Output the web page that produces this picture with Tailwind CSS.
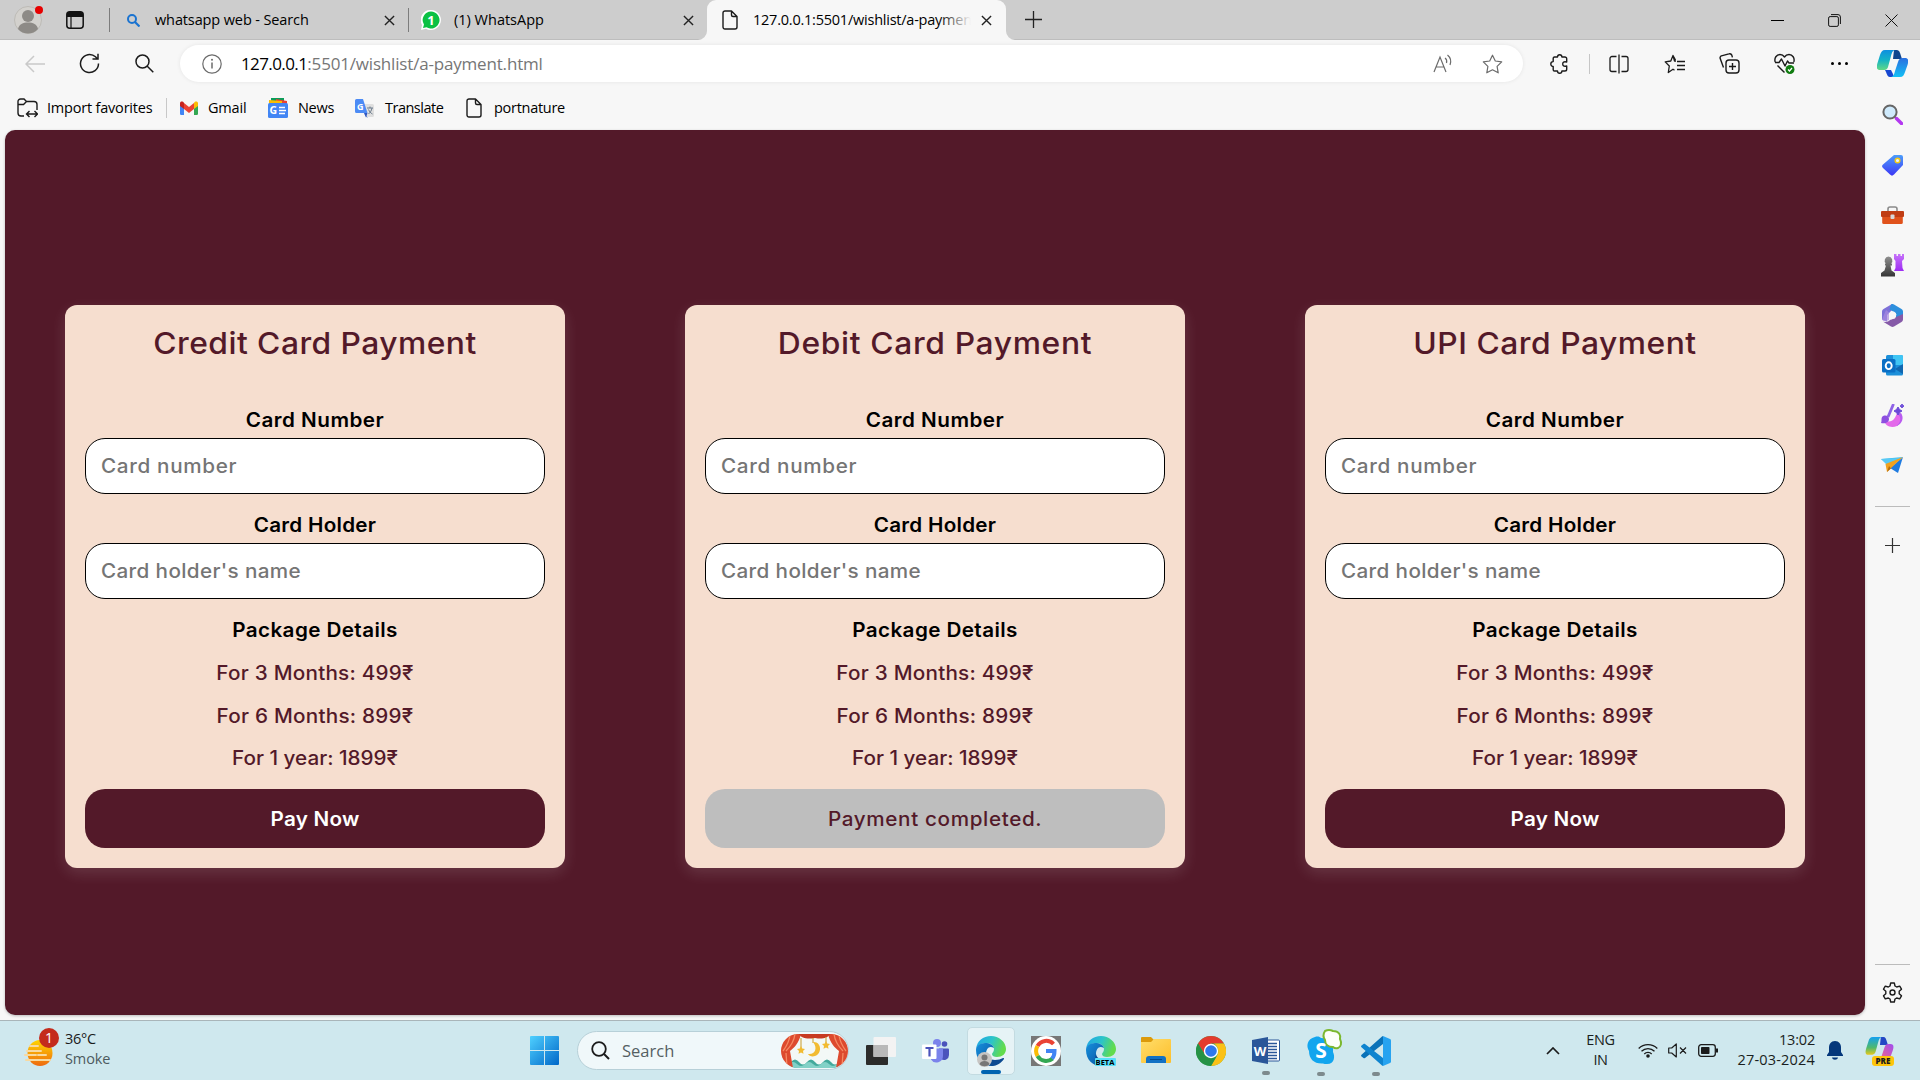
<!DOCTYPE html>
<html lang="en">
<head>
<meta charset="utf-8">
<title>Payment</title>
<script src="https://cdn.jsdelivr.net/npm/@tailwindcss/browser@4"></script>
</head>
<body class="w-[1920px] h-[1080px] overflow-hidden flex flex-col bg-[#f7f7f7] text-black whitespace-nowrap font-['Open_Sans',sans-serif] text-[14.5px] leading-5">

<svg class="absolute w-0 h-0" aria-hidden="true">
  <defs>
    <linearGradient id="edgeA" x1="0" y1="0" x2="1" y2="0.3"><stop offset="0" stop-color="#1fa3e8"/><stop offset=".55" stop-color="#2cc4c9"/><stop offset="1" stop-color="#62dc4c"/></linearGradient>
    <linearGradient id="edgeB" x1="0" y1="0" x2="1" y2="1"><stop offset="0" stop-color="#1590dc"/><stop offset="1" stop-color="#0a4f9e"/></linearGradient>
    <linearGradient id="copA" x1="0" y1="0" x2="0" y2="1"><stop offset="0" stop-color="#0d8fe0"/><stop offset=".5" stop-color="#14b3c6"/><stop offset="1" stop-color="#62d985"/></linearGradient>
    <linearGradient id="copB" x1="0" y1="0" x2="0" y2="1"><stop offset="0" stop-color="#2a6fe0"/><stop offset="1" stop-color="#14c0f5"/></linearGradient>
    <linearGradient id="preA" x1="0" y1="0" x2="0" y2="1"><stop offset="0" stop-color="#14a0ef"/><stop offset=".6" stop-color="#4fb96c"/><stop offset="1" stop-color="#e8c81c"/></linearGradient>
    <linearGradient id="preB" x1="1" y1="0" x2="0" y2="1"><stop offset="0" stop-color="#a04df0"/><stop offset="1" stop-color="#ff6a7a"/></linearGradient>
    <linearGradient id="win" x1="0" y1="0" x2="1" y2="1"><stop offset="0" stop-color="#4fd0ff"/><stop offset="1" stop-color="#0067c8"/></linearGradient>
    <linearGradient id="sun" x1="0" y1="0" x2="0" y2="1"><stop offset="0" stop-color="#ffd400"/><stop offset="1" stop-color="#ee6a10"/></linearGradient>
    <linearGradient id="fold" x1="0" y1="0" x2="1" y2="1"><stop offset="0" stop-color="#ffdd6b"/><stop offset="1" stop-color="#fdbf2b"/></linearGradient>
    <linearGradient id="tag" x1="0" y1="0" x2="0" y2="1"><stop offset="0" stop-color="#4c9dfb"/><stop offset="1" stop-color="#3c37f5"/></linearGradient>
    <linearGradient id="rook" x1="0" y1="0" x2="0" y2="1"><stop offset="0" stop-color="#c774fa"/><stop offset="1" stop-color="#9d2cf2"/></linearGradient>
    <linearGradient id="pawn" x1="0" y1="0" x2="0" y2="1"><stop offset="0" stop-color="#909090"/><stop offset="1" stop-color="#353535"/></linearGradient>
    <symbol id="edge" viewBox="0 0 30 30">
      <path fill="url(#edgeA)" d="M0 13C1 5 7 0 15 0c8 0 15 6 15 13 0 5-4 8-9 8-3 0-5-1-5-3 0-1 2-2 2-5 0-3-3-6-8-6-5 0-9 3-10 6z"/>
      <path fill="url(#edgeB)" d="M0 14c0-4 4-7 9-7 5 0 8 2 9 5-5-3-8 1-8 6 0 5 4 10 9 11-2 1-3 1-4 1C7 30 0 24 0 14z"/>
      <path fill="#0c4a91" d="M10 18c0 3 4 6 9 6 3 0 6-1 8-2 1 0 1 0 1 1-3 4-7 7-12 7-5-2-8-7-6-12z"/>
    </symbol>
    <symbol id="doc" viewBox="0 0 16 20"><path fill="none" stroke="#1b1b1b" stroke-width="1.4" stroke-linejoin="round" d="M3 1h6.500l5.500 5.500V17a2 2 0 0 1-2 2H3a2 2 0 0 1-2-2V3a2 2 0 0 1 2-2zM9.500 1v4a1.500 1.500 0 0 0 1.500 1.500h4"/></symbol>
    <symbol id="x" viewBox="0 0 12 12"><path fill="none" stroke="#222" stroke-width="1.500" d="M1 1l10 10M11 1L1 11"/></symbol>
  </defs>
</svg>

<!-- Tab strip -->
<header class="h-10 shrink-0 bg-[#cdcdcd] border-b border-[#bdbdbd] flex items-start">
  <div class="w-14 h-10 flex items-center justify-center">
    <svg class="w-7 h-7 overflow-visible" viewBox="0 0 28 28"><circle cx="14" cy="14" r="13.500" fill="#d3d1cd" stroke="#bdbbb6"/><circle cx="14" cy="10" r="6" fill="#8d8a86"/><path fill="#8d8a86" d="M4 23c1-5 5-6.500 10-6.500S23 18 24 23c-5 6-15 6-20 0z"/><circle cx="25" cy="4" r="4" fill="#e60000"/></svg>
  </div>
  <div class="w-[38px] h-10 flex items-center justify-center">
    <svg class="w-[18px] h-[18px]" viewBox="0 0 18 18"><rect x=".8" y=".8" width="16.400" height="16.400" rx="3" fill="none" stroke="#111" stroke-width="1.500"/><path d="M1 3a2 2 0 0 1 2-2h12a2 2 0 0 1 2 2v3H1z" fill="#111"/><path d="M5 5v12" stroke="#111" stroke-width="1.200"/></svg>
  </div>
  <div class="ml-[15px] w-px h-6 mt-2 bg-[#7c7c7c]"></div>
  <div class="w-[298px] h-10 flex items-center pl-[17px] pr-[13px]">
    <svg class="w-[13px] h-[13px]" viewBox="0 0 13 13"><circle cx="5" cy="5" r="4" fill="none" stroke="#1a73d0" stroke-width="2"/><path d="M8 8l4.500 4.500" stroke="#1a73d0" stroke-width="2.200"/></svg>
    <span class="ml-[15px] tracking-[-0.12px] flex-1">whatsapp web - Search</span>
    <svg class="w-[11px] h-[11px]"><use href="#x"/></svg>
  </div>
  <div class="w-px h-6 mt-2 bg-[#7c7c7c]"></div>
  <div class="w-[298px] h-10 flex items-center pl-[12px] pr-[13px]">
    <svg class="w-5 h-5" viewBox="0 0 20 20"><path d="M10 0a10 10 0 1 1-5 18.700L0 20l1-5A10 10 0 0 1 10 0z" fill="#fff"/><path d="M10 1.500a8.500 8.500 0 1 1-4.500 15.700L2 18l1-3.500A8.500 8.500 0 0 1 10 1.500z" fill="#0bc143"/><text x="10" y="14.500" text-anchor="middle" font-family="Open Sans" font-size="13" font-weight="700" fill="#fff">1</text></svg>
    <span class="ml-[13px] flex-1">(1) WhatsApp</span>
    <svg class="w-[11px] h-[11px]"><use href="#x"/></svg>
  </div>
  <div class="relative w-[299px] h-10 bg-[#f7f7f7] rounded-t-[9px] flex items-center pl-[15px] pr-[14px]">
    <svg class="absolute -left-[9px] bottom-0 w-[9px] h-[9px]" viewBox="0 0 9 9"><path d="M9 0v9H0a9 9 0 0 0 9-9z" fill="#f7f7f7"/></svg>
    <svg class="absolute -right-[9px] bottom-0 w-[9px] h-[9px]" viewBox="0 0 9 9"><path d="M0 0v9h9a9 9 0 0 1-9-9z" fill="#f7f7f7"/></svg>
    <svg class="w-4 h-5"><use href="#doc"/></svg>
    <div class="relative ml-[15px] w-[218px] overflow-hidden tracking-[-0.23px]">127.0.0.1:5501/wishlist/a-paymen<div class="absolute right-0 top-0 h-5 w-8 bg-linear-to-r from-[#f7f7f7]/0 to-[#f7f7f7]"></div></div>
    <svg class="w-[11px] h-[11px] ml-auto"><use href="#x"/></svg>
  </div>
  <svg class="w-[17px] h-[17px] ml-[19px] mt-[11px]" viewBox="0 0 17 17"><path d="M8.500 0v17M0 8.500h17" stroke="#222" stroke-width="1.300"/></svg>
  <div class="ml-auto h-10 flex items-center">
    <div class="w-[57px] flex justify-center"><div class="w-[13px] h-px bg-black"></div></div>
    <div class="w-[57px] flex justify-center"><svg class="w-[13px] h-[13px]" viewBox="0 0 13 13"><rect x=".6" y="2.600" width="9.800" height="9.800" rx="1.500" fill="none" stroke="#111"/><path d="M3 .6h7a2.400 2.400 0 0 1 2.400 2.400v7" fill="none" stroke="#111"/></svg></div>
    <div class="w-[57px] flex justify-center"><svg class="w-[13px] h-[13px]" viewBox="0 0 13 13"><path d="M.5.5l12 12M12.500.5l-12 12" stroke="#111"/></svg></div>
  </div>
</header>

<!-- Toolbar -->
<div class="h-[46px] shrink-0 flex items-center pl-[7px] pt-px">
  <div class="w-[55px] flex justify-center"><svg class="w-5 h-[18px]" viewBox="0 0 20 18"><path d="M9 1L1 9l8 8M1 9h19" fill="none" stroke="#c9c9c9" stroke-width="1.500"/></svg></div>
  <div class="w-[55px] flex justify-center"><svg class="w-[21px] h-[21px]" viewBox="0 0 21 21"><path d="M19.500 10.500a9 9 0 1 1-3-6.700L18.500 6M19 .8V6h-5.500" fill="none" stroke="#1b1b1b" stroke-width="1.500"/></svg></div>
  <div class="w-[55px] flex justify-center"><svg class="w-[19px] h-[19px]" viewBox="0 0 19 19"><circle cx="7.500" cy="7.500" r="6.500" fill="none" stroke="#1b1b1b" stroke-width="1.500"/><path d="M12 12l6.300 6.300" stroke="#1b1b1b" stroke-width="1.500"/></svg></div>
  <div class="ml-[8px] w-[1343px] h-[37px] rounded-full bg-white shadow-[0_0_4px_rgba(0,0,0,0.08)] flex items-center">
    <svg class="ml-[22px] w-5 h-5" viewBox="0 0 20 20"><circle cx="10" cy="10" r="9.200" fill="none" stroke="#6b6b6b" stroke-width="1.200"/><path d="M10 8.500v6" stroke="#6b6b6b" stroke-width="1.500"/><circle cx="10" cy="5.700" r="1" fill="#6b6b6b"/></svg>
    <div class="ml-[19px] text-[17px] leading-6 tracking-[-0.18px] flex-1 text-[#767676]"><span class="text-black tracking-[-0.6px]">127.0.0.1</span>:5501/wishlist/a-payment.html</div>
    <svg class="w-5 h-[19px] mr-[29px]" viewBox="0 0 20 19"><path d="M1 18L7 3l6 15M3.200 13h7.600M12 4c1.500 1 2 3 1.500 5M14.500 1c3 2.500 4 6 2.500 10" fill="none" stroke="#6b6b6b" stroke-width="1.200"/></svg>
    <svg class="w-[21px] h-5 mr-[20px]" viewBox="0 0 21 20"><path d="M10.500 1.200l2.800 5.800 6.400.9-4.600 4.500 1.100 6.400-5.700-3-5.700 3 1.100-6.400L1.300 7.900 7.700 7z" fill="none" stroke="#6b6b6b" stroke-width="1.200" stroke-linejoin="round"/></svg>
  </div>
  <svg class="ml-[26px] w-5 h-5" viewBox="0 0 20 20"><path d="M5.500 3h3a2.200 2.200 0 0 1 4.400 0h3a1.800 1.800 0 0 1 1.800 1.800V8c-3-.8-4 .3-4 2s1 2.800 4 2v3.200a1.800 1.800 0 0 1-1.800 1.800h-3a2.200 2.200 0 0 1-4.400 0h-3a1.300 1.300 0 0 1-1.300-1.300v-3.300a2.400 2.400 0 0 1 0-4.800V4.500A1.400 1.400 0 0 1 5.500 3z" fill="none" stroke="#1b1b1b" stroke-width="1.400" stroke-linejoin="round"/></svg>
  <div class="ml-5 w-px h-5 bg-[#c6c6c6]"></div>
  <div class="w-[57px] flex justify-center"><svg class="w-5 h-5" viewBox="0 0 20 20"><path d="M7.500 2.500H3a2 2 0 0 0-2 2v11a2 2 0 0 0 2 2h4.500M12.500 2.500H17a2 2 0 0 1 2 2v11a2 2 0 0 1-2 2h-4.500M10 .5v19" fill="none" stroke="#1b1b1b" stroke-width="1.300"/></svg></div>
  <div class="w-[55px] flex justify-center"><svg class="w-[21px] h-5" viewBox="0 0 21 20"><path d="M12 7h-1.500L9 1.500 6.800 7l-5.600.9L5.300 12l-1 6.500 4.700-3.300 1.500 1M13 7.500h8M13 11.500h8M13 15.500h8M9 1.500L11.500 6" fill="none" stroke="#1b1b1b" stroke-width="1.300" stroke-linejoin="round"/></svg></div>
  <div class="w-[55px] flex justify-center"><svg class="w-[21px] h-[21px]" viewBox="0 0 21 21"><rect x="7" y="7" width="13" height="13" rx="3" fill="none" stroke="#1b1b1b" stroke-width="1.400"/><path d="M13.500 10v7M10 13.500h7M4.500 14.500L1.200 5.500a2 2 0 0 1 1.200-2.600l7.500-2a2.300 2.300 0 0 1 3 1.500l.5 2" fill="none" stroke="#1b1b1b" stroke-width="1.400"/></svg></div>
  <div class="w-[55px] flex justify-center"><svg class="w-[21px] h-[21px]" viewBox="0 0 21 21"><path d="M1.200 9C0 5 2.500 1.500 6 1.500c2 0 3.500 1 4.500 2.500 1-1.500 2.500-2.500 4.500-2.500 3.500 0 6 3.500 4.800 7.500M1 9.500h4L7.500 6l3.500 7 2.500-5 1.500 2h5M3.500 12.500l7 7" fill="none" stroke="#1b1b1b" stroke-width="1.400" stroke-linejoin="round"/><circle cx="16" cy="16.500" r="4.500" fill="#107c10"/><path d="M14 16.500l1.500 1.500 2.500-3" fill="none" stroke="#fff" stroke-width="1.200"/></svg></div>
  <div class="w-[55px] flex justify-center gap-1"><i class="w-[3px] h-[3px] rounded-full bg-black"></i><i class="w-[3px] h-[3px] rounded-full bg-black"></i><i class="w-[3px] h-[3px] rounded-full bg-black"></i></div>
  <div class="w-[50px] flex justify-center"><svg class="w-[31px] h-[27px]" viewBox="0 0 31 27"><path d="M17 0h3c2 0 3 2 4 6l1 3h-9z" fill="#10458f"/><path d="M8 0h11c-3 0-4 2-5 6l-3 11c-1 3-3 3-5 3H3c-3 0-4-2-2.500-7L3 5c1-3 2-5 5-5z" fill="url(#copA)"/><path d="M8 20h6l2 4c.5 2 1 3 2 3h-5c-2 0-3-2-4-5z" fill="#1747d1"/><path d="M23 27H13c3 0 4-2 5-6l3-9c1-3 2-4 5-4h2c3 0 4 2 2.500 7L28 22c-1 3-2 5-5 5z" fill="url(#copB)"/></svg></div>
</div>

<!-- Favourites bar, page and side bar -->
<div class="flex-1 min-h-0 flex">
  <div class="w-[1865px] flex flex-col">
    <div class="h-11 shrink-0 flex items-center pl-[17px]">
      <svg class="w-[21px] h-5" viewBox="0 0 21 20"><path d="M7 18H4a3 3 0 0 1-3-3V3.500A2.500 2.500 0 0 1 3.500 1H7l2.500 2.500H17a3 3 0 0 1 3 3V12M1 6.500h5.500l3-3M10 16h10M12.500 13l-3 3 3 3M17.500 13l3 3-3 3" fill="none" stroke="#1b1b1b" stroke-width="1.400"/></svg>
      <span class="ml-[9px] w-[119px] tracking-[-0.2px]">Import favorites</span>
      <div class="w-px h-5 bg-[#c8c8c8]"></div>
      <svg class="ml-[13px] w-[18px] h-[14px]" viewBox="0 0 18 14"><path d="M0 2h4v12H1.200A1.200 1.200 0 0 1 0 12.800z" fill="#4285f4"/><path d="M14 2h4v10.800a1.200 1.200 0 0 1-1.200 1.200H14z" fill="#34a853"/><path d="M14 2c1-2 4-2 4 .5V5l-4 3z" fill="#fbbc04"/><path d="M4 2l5 4 5-4v6l-5 4-5-4z" fill="#ea4335"/><path d="M0 2.500C0 0 3 0 4 2v6L0 5z" fill="#c5221f"/></svg>
      <span class="ml-[10px] w-[60px] tracking-[-0.2px]">Gmail</span>
      <svg class="w-5 h-5" viewBox="0 0 20 20"><path d="M3 0h13v6H3z" fill="#0c9d58"/><path d="M8 1l11 2v5H8z" fill="#ea4335"/><path d="M1 2l13 1v4H1z" fill="#fbbc04"/><rect y="5" width="20" height="15" rx="1.500" fill="#4285f4"/><text x="1.500" y="16" font-family="Open Sans" font-size="10.500" font-weight="700" fill="#fff">G</text><path d="M11 9.500h6M11 12.500h7M11 15.500h6" stroke="#fff" stroke-width="1.500"/></svg>
      <span class="ml-[10px] w-[57px] tracking-[-0.3px]">News</span>
      <svg class="w-[19px] h-[19px]" viewBox="0 0 19 19"><path d="M8 5h9.500A1.500 1.500 0 0 1 19 6.500v10a1.500 1.500 0 0 1-1.500 1.500H11z" fill="#dfdfdf"/><path d="M9 14l4 5-1.500-1z" fill="#3366cc"/><path d="M1.500 0H8l4.500 14h-11A1.500 1.500 0 0 1 0 12.500v-11A1.500 1.500 0 0 1 1.500 0z" fill="#4c8bf5"/><path d="M9 14h3.500l-1.500 4.500z" fill="#3057c0"/><text x="2" y="10.500" font-family="Open Sans" font-size="9" font-weight="700" fill="#fff">G</text><path d="M12 9h6M15 7.500V9M17 9c-.5 3-2 4.500-3.500 6M13.500 10.500c1 2 2 3.500 4 4.500" fill="none" stroke="#6b7b8c"/></svg>
      <span class="ml-[11px] w-[81px] tracking-[-0.5px]">Translate</span>
      <svg class="w-4 h-5"><use href="#doc"/></svg>
      <span class="ml-[12px] tracking-[-0.28px]">portnature</span>
    </div>

    <main class="ml-[5px] w-[1860px] h-[885px] rounded-[10px] bg-[#531929] shadow-[0_1px_3px_rgba(0,0,0,0.25)] pt-[175px] px-[60px] flex items-start gap-[120px] font-['Inter',sans-serif] text-[19.5px] leading-6 font-medium text-center">
      <form class="w-[500px] h-[563px] rounded-xl bg-[#f6decf] p-5 shadow-[0_5px_15px_rgba(255,255,255,0.13)] flex flex-col">
        <h2 class="h-[37px] text-[30px] leading-[37px] scale-x-[1.06] tracking-[0.42px] text-[#531929]">Credit Card Payment</h2>
        <label class="mt-[46px] font-semibold scale-x-[1.06] tracking-[0.45px]">Card Number</label>
        <div class="mt-1.5 h-14 rounded-[20px] border border-black bg-white px-[15px] text-left leading-[54px] text-[#757575]"><span class="inline-block origin-left scale-x-[1.06] tracking-[0.62px]">Card number</span></div>
        <label class="mt-[19px] font-semibold scale-x-[1.06] tracking-[0.25px]">Card Holder</label>
        <div class="mt-1.5 h-14 rounded-[20px] border border-black bg-white px-[15px] text-left leading-[54px] text-[#757575]"><span class="inline-block origin-left scale-x-[1.06] tracking-[0.34px]">Card holder's name</span></div>
        <label class="mt-[19px] font-semibold scale-x-[1.06] tracking-[0.37px]">Package Details</label>
        <p class="mt-[19px] scale-x-[1.06] tracking-[0.22px] text-[#531929]">For 3 Months: 499₹</p>
        <p class="mt-[19px] scale-x-[1.06] tracking-[0.22px] text-[#531929]">For 6 Months: 899₹</p>
        <p class="mt-[18px] scale-x-[1.06] text-[#531929]">For 1 year: 1899₹</p>
        <div class="mt-[19px] h-[59px] rounded-[20px] bg-[#531929] text-white font-semibold leading-[61px]"><span class="inline-block scale-x-[1.06] tracking-[0.25px]">Pay Now</span></div>
      </form>
      <form class="w-[500px] h-[563px] rounded-xl bg-[#f6decf] p-5 shadow-[0_5px_15px_rgba(255,255,255,0.13)] flex flex-col">
        <h2 class="h-[37px] text-[30px] leading-[37px] scale-x-[1.06] tracking-[0.6px] text-[#531929]">Debit Card Payment</h2>
        <label class="mt-[46px] font-semibold scale-x-[1.06] tracking-[0.45px]">Card Number</label>
        <div class="mt-1.5 h-14 rounded-[20px] border border-black bg-white px-[15px] text-left leading-[54px] text-[#757575]"><span class="inline-block origin-left scale-x-[1.06] tracking-[0.62px]">Card number</span></div>
        <label class="mt-[19px] font-semibold scale-x-[1.06] tracking-[0.25px]">Card Holder</label>
        <div class="mt-1.5 h-14 rounded-[20px] border border-black bg-white px-[15px] text-left leading-[54px] text-[#757575]"><span class="inline-block origin-left scale-x-[1.06] tracking-[0.34px]">Card holder's name</span></div>
        <label class="mt-[19px] font-semibold scale-x-[1.06] tracking-[0.37px]">Package Details</label>
        <p class="mt-[19px] scale-x-[1.06] tracking-[0.22px] text-[#531929]">For 3 Months: 499₹</p>
        <p class="mt-[19px] scale-x-[1.06] tracking-[0.22px] text-[#531929]">For 6 Months: 899₹</p>
        <p class="mt-[18px] scale-x-[1.06] text-[#531929]">For 1 year: 1899₹</p>
        <div class="mt-[19px] h-[59px] rounded-[20px] bg-[#bebebe] text-[#531929] leading-[61px]"><span class="inline-block scale-x-[1.06] tracking-[0.6px]">Payment completed.</span></div>
      </form>
      <form class="w-[500px] h-[563px] rounded-xl bg-[#f6decf] p-5 shadow-[0_5px_15px_rgba(255,255,255,0.13)] flex flex-col">
        <h2 class="h-[37px] text-[30px] leading-[37px] scale-x-[1.06] tracking-[0.48px] text-[#531929]">UPI Card Payment</h2>
        <label class="mt-[46px] font-semibold scale-x-[1.06] tracking-[0.45px]">Card Number</label>
        <div class="mt-1.5 h-14 rounded-[20px] border border-black bg-white px-[15px] text-left leading-[54px] text-[#757575]"><span class="inline-block origin-left scale-x-[1.06] tracking-[0.62px]">Card number</span></div>
        <label class="mt-[19px] font-semibold scale-x-[1.06] tracking-[0.25px]">Card Holder</label>
        <div class="mt-1.5 h-14 rounded-[20px] border border-black bg-white px-[15px] text-left leading-[54px] text-[#757575]"><span class="inline-block origin-left scale-x-[1.06] tracking-[0.34px]">Card holder's name</span></div>
        <label class="mt-[19px] font-semibold scale-x-[1.06] tracking-[0.37px]">Package Details</label>
        <p class="mt-[19px] scale-x-[1.06] tracking-[0.22px] text-[#531929]">For 3 Months: 499₹</p>
        <p class="mt-[19px] scale-x-[1.06] tracking-[0.22px] text-[#531929]">For 6 Months: 899₹</p>
        <p class="mt-[18px] scale-x-[1.06] text-[#531929]">For 1 year: 1899₹</p>
        <div class="mt-[19px] h-[59px] rounded-[20px] bg-[#531929] text-white font-semibold leading-[61px]"><span class="inline-block scale-x-[1.06] tracking-[0.25px]">Pay Now</span></div>
      </form>
    </main>
  </div>

  <aside class="flex-1 flex flex-col items-center pt-[2px] pr-px">
    <div class="h-[52px] flex items-center"><svg class="w-[21px] h-[21px]" viewBox="0 0 21 21"><path d="M13 13l2 2" stroke="#555" stroke-width="2"/><path d="M14.500 14.500l5 5" stroke="#b338f0" stroke-width="3.500" stroke-linecap="round"/><circle cx="8" cy="8" r="6.600" fill="#cfeafc" stroke="#666" stroke-width="2"/></svg></div>
    <div class="h-[50px] flex items-center"><svg class="w-[21px] h-[21px]" viewBox="0 0 21 21"><path d="M12 0h7a2 2 0 0 1 2 2v8L12 19.500c-1.500 1.500-2.500 1.500-4 0L1 13c-1.500-1.500-1-2.500 0-3.500z" fill="url(#tag)"/><circle cx="15.500" cy="5.500" r="2.300" fill="#e9f2ff" stroke="#f3c916" stroke-width="1.500"/></svg></div>
    <div class="h-[50px] flex items-center"><svg class="w-[23px] h-[18px]" viewBox="0 0 23 18"><path d="M7 5V3a2 2 0 0 1 2-2h5a2 2 0 0 1 2 2v2" fill="none" stroke="#8b8b8b" stroke-width="1.600"/><rect x="1.200" y="9" width="20.600" height="9" rx="1.500" fill="#e0521b"/><rect x="0" y="5" width="23" height="6" rx="1" fill="#c03d14"/><rect x="9.500" y="8.500" width="4" height="4.500" rx="1" fill="#d8d8d8"/></svg></div>
    <div class="h-[50px] flex items-center"><svg class="w-[23px] h-[23px]" viewBox="0 0 23 23"><path d="M13 0h2.500v2H17V0h2.500v2H21V0h2v5l-2 2 .5 7 1.500 3H13l1.500-3V7L13 5z" fill="url(#rook)"/><path d="M7.500 2.500a4 4 0 0 1 2.500 7h1v2H9.500l1 5 3.500 2.500V22.500H0V19l3.500-2.500 1.500-5H4v-2h1a4 4 0 0 1 2.500-7z" fill="url(#pawn)"/></svg></div>
    <div class="h-[50px] flex items-center"><svg class="w-[21px] h-[23px]" viewBox="0 0 21 23"><path d="M10 0L1.500 5A3 3 0 0 0 0 7.500v8l5 2V11l5-5 3-3z" fill="#7e71d8"/><path d="M9 .5c1-.7 2-.7 3 0L19.500 5A3 3 0 0 1 21 7.500V14l-7-1V9L7.500 5.500z" fill="#2d8fdd"/><path d="M21 10v5.500a3 3 0 0 1-1.500 2.500L12 22.500c-1 .6-2 .6-3 0L.8 17.500C4 19 7 17 9 15.500l5-2.500z" fill="#865aa8"/><path d="M0 15.500c2 3 5 1.500 7 .5V8.500L4 6z" fill="#a98ae0" opacity=".7"/><path d="M8 9l4-1.500 2.500 3L13 14.500l-4 1-2-3z" fill="#f7f7f7"/></svg></div>
    <div class="h-[50px] flex items-center"><svg class="w-[21px] h-[21px]" viewBox="0 0 21 21"><rect x="4" y="0" width="17" height="20.500" rx="1.500" fill="#1c8fd9"/><path d="M11 0h8.500A1.500 1.500 0 0 1 21 1.500V10H11z" fill="#40c5f4"/><path d="M21 9v10l-8-5z" fill="#1067b0"/><rect x="0" y="4" width="13.500" height="13.500" rx="1.500" fill="#0a6fc5"/><ellipse cx="6.700" cy="10.700" rx="3" ry="3.400" fill="none" stroke="#fff" stroke-width="1.900"/></svg></div>
    <div class="h-[50px] flex items-center"><svg class="w-[23px] h-[23px]" viewBox="0 0 23 23"><path d="M3 16c3 2 8 2 10-1 2-2 2-5 4-7 5 3 5 11-1 14-6 2.500-12 0-13-6z" fill="#e36aea"/><path d="M16 10c5 2 4 9-1 12 7-2 8-9 5-13z" fill="#b95cf0"/><path d="M12.500 0L7 13" stroke="#8e62e6" stroke-width="2.800"/><path d="M1 13c3-3 7-1 7 2s-3 5-8 4c1-2 0-4 1-6z" fill="#8d4fe0"/><path d="M17 3l1.500 2.500L21 7l-2.500 1.500L17 11l-1.500-2.500L13 7l2.500-1.500zM21 0l.8 1.500L23 2l-1.200.7L21 4l-.8-1.300L19 2l1.200-.5z" fill="#6a49d8" stroke="#6a49d8"/></svg></div>
    <div class="h-[50px] flex items-center"><svg class="w-[22px] h-[16px]" viewBox="0 0 22 16"><path d="M0 2L22 0 9 9z" fill="#36bff0"/><path d="M0 2l20-1L6 8z" fill="#59c9f5"/><path d="M22 0l-5 16-8-5z" fill="#1f7be0"/><path d="M22 0L4.500 7l1.500 8 4-4z" fill="#f2a21e"/><path d="M8 9l-2 6 4-3.500z" fill="#b36b0c"/></svg></div>
    <div class="mt-[16px] w-[35px] h-px bg-[#bcbcbc]"></div>
    <svg class="mt-[31px] w-[15px] h-[15px]" viewBox="0 0 15 15"><path d="M7.500 0v15M0 7.500h15" stroke="#333" stroke-width="1.200"/></svg>
    <div class="mt-auto w-[35px] h-px bg-[#bcbcbc]"></div>
    <svg class="mt-[17px] mb-[17px] w-[21px] h-[21px]" viewBox="0 0 21 21"><path d="M8.700 1h3.600l.7 3 1.700 1 3-.9 1.800 3.100-2.300 2.100v2.400l2.300 2.100-1.800 3.100-3-.9-1.700 1-.7 3H8.700L8 17l-1.700-1-3 .9-1.800-3.100 2.300-2.100V9.300L1.500 7.200l1.800-3.100 3 .9L8 4z" fill="none" stroke="#1b1b1b" stroke-width="1.400" stroke-linejoin="round"/><circle cx="10.500" cy="10.500" r="2.500" fill="none" stroke="#1b1b1b" stroke-width="1.400"/></svg>
  </aside>
</div>

<!-- Taskbar -->
<footer class="h-[60px] shrink-0 border-t border-[#a9b5b9] bg-[#cfe8ee] flex items-center">
  <div class="w-[530px] flex items-center pl-[24px]">
    <svg class="w-[36px] h-[44px] -mt-[3px]" viewBox="0 0 36 44"><ellipse cx="16" cy="26" rx="12.500" ry="13" fill="url(#sun)"/><path d="M6 19h8M3 24h14M1 28h11M14 28h8M2 33h24" stroke="#f8d9a0" stroke-width="2" stroke-linecap="round"/><circle cx="25" cy="11" r="10" fill="#c42b1c"/><text x="25" y="16" text-anchor="middle" font-family="Open Sans" font-size="14" fill="#fff">1</text></svg>
    <div class="ml-[5px] -mt-[3px] leading-[20px]"><div class="tracking-[-0.23px] text-[#1a1a1a]">36°C</div><div class="tracking-[-0.1px] text-[#4d5a5e]">Smoke</div></div>
  </div>
  <svg class="w-[29px] h-[29px]" viewBox="0 0 29 29"><path fill="url(#win)" d="M1 0h13v14H0V1a1 1 0 0 1 1-1zM15 0h13a1 1 0 0 1 1 1v13H15zM0 15h14v14H1a1 1 0 0 1-1-1zM15 15h14v13a1 1 0 0 1-1 1H15z"/></svg>
  <div class="ml-[18px] w-[272px] h-[39px] rounded-full bg-[#f0f8fa] border border-[#b7d0d8] flex items-center pl-[13px] pr-0">
    <svg class="w-[19px] h-[19px]" viewBox="0 0 19 19"><circle cx="8" cy="8" r="6.800" fill="none" stroke="#1b1b1b" stroke-width="1.800"/><path d="M13 13l5 5" stroke="#1b1b1b" stroke-width="2"/></svg>
    <span class="ml-[12px] flex-1 text-[16.5px] text-[#555f63]">Search</span>
    <svg class="w-[67px] h-[34px] rounded-full" viewBox="0 0 67 34"><rect width="67" height="34" fill="#f3f8f6"/><path d="M10 28q4-5 8 0t8 0 8 0 8 0 8 0 8 0V34H10z" fill="#43a99c"/><path d="M8 30q4-4 8 0t8 0 8 0 8 0 8 0 8 0V34H8z" fill="#82d1c7"/><path d="M0 0h20c-2 9-7 14-11 17l3 17H0zM67 0H47c2 9 7 14 11 17l-3 17h12z" fill="#dd4a2e"/><path d="M18 0h31c-3 5-9 5-15 4-7 1-13 1-16-4z" fill="#c73a22"/><path d="M9 1C8 9 5 13 2 17M14 0c-1 8-5 13-9 17M5 19l1 14M58 1c1 8 4 12 7 16M53 0c1 8 5 13 9 17M62 19l-1 14" fill="none" stroke="#f58a63" stroke-width="1.300"/><path d="M20 4v10M45 3v6M32 4v5" stroke="#c99c2a"/><path d="M32 8c8-1 10 11 2 14-3 1-6 0-7-2 7 1 10-6 5-12z" fill="#f2bb31"/><path d="M20 12l1.200 2.600 2.800.4-2 2 .5 2.800-2.500-1.300-2.500 1.300.5-2.800-2-2 2.800-.4zM45 7l1.200 2.600 2.800.4-2 2 .5 2.800-2.500-1.300-2.500 1.300.5-2.800-2-2 2.800-.4z" fill="#f2bb31"/></svg>
  </div>
  <div class="ml-[4px] flex items-center">
    <div class="w-[55px] flex justify-center"><svg class="w-[30px] h-[28px]" viewBox="0 0 30 28"><rect x="0" y="8" width="22" height="20" rx="1" fill="#2c2c2b"/><rect x="7.500" y="0" width="22.500" height="20" rx="1" fill="#f3f3f3"/><rect x="7.500" y="8" width="14.500" height="12" fill="#b9b9b9"/></svg></div>
    <div class="w-[55px] flex justify-center"><svg class="w-[27px] h-6" viewBox="0 0 27 24"><circle cx="22.500" cy="5" r="2.800" fill="#4b53bc"/><path d="M17 9.500h9a1 1 0 0 1 1 1V16a5 5 0 0 1-8 4z" fill="#4b53bc"/><circle cx="15" cy="4" r="4" fill="#7b83eb"/><path d="M9 9.500h12V17a6.500 6.500 0 0 1-12 3.500z" fill="#7b83eb"/><rect x="0" y="5.500" width="14.500" height="14.500" rx="1" fill="#fff"/><path d="M3.500 9h8M7.500 9v8.500" stroke="#4b53bc" stroke-width="2.200"/></svg></div>
    <div class="w-[55px] flex justify-center"><div class="relative w-12 h-12 rounded-[5px] bg-[#e6f3f6] border border-[#c3dbe1] flex items-center justify-center"><svg class="w-[30px] h-[30px]"><use href="#edge"/></svg><svg class="absolute left-[9px] top-[24px] w-[15px] h-[15px]" viewBox="0 0 15 15"><circle cx="7.500" cy="7.500" r="7.500" fill="#c7c5c3"/><circle cx="7.500" cy="5.500" r="3" fill="#777"/><path d="M2.500 12c1-4 9-4 10 0-2 3-8 3-10 0z" fill="#777"/></svg><div class="absolute bottom-0 left-[13px] w-5 h-1 rounded-full bg-[#0063b1]"></div></div></div>
    <div class="w-[55px] flex justify-center"><svg class="w-[30px] h-[30px]" viewBox="0 0 30 30"><rect width="30" height="30" fill="#777"/><circle cx="15" cy="15" r="15" fill="#fff"/><g fill="none" stroke-width="4"><path d="M22.500 8A10 10 0 0 0 6.500 10" stroke="#ea4335"/><path d="M6.500 10a10 10 0 0 0 0 10" stroke="#fbbc05"/><path d="M6.500 20a10 10 0 0 0 15 2.600" stroke="#34a853"/><path d="M15 15h8.500c0 3-.5 5.500-2.500 7.800" stroke="#4285f4"/></g></svg></div>
    <div class="w-[55px] flex justify-center"><div class="relative w-[30px] h-[30px]"><svg class="w-[30px] h-[30px]"><use href="#edge"/></svg><div class="absolute left-[9px] top-[22px] w-[21px] h-2 rounded-[1px] bg-[#58e0f8] text-[7.5px] leading-2 font-bold text-center">BETA</div></div></div>
    <div class="w-[55px] flex justify-center"><svg class="w-[30px] h-[27px]" viewBox="0 0 30 27"><path d="M1 0h9l3 3v5H0V1a1 1 0 0 1 1-1z" fill="#dc9a0b"/><path d="M13 2h16a1 1 0 0 1 1 1v22a1 1 0 0 1-1 1H1a1 1 0 0 1-1-1V5h10z" fill="url(#fold)"/><path d="M5 26v-4a3 3 0 0 1 3-3h14a3 3 0 0 1 3 3v4z" fill="#1271c4"/><path d="M9 22.500h12" stroke="#064a8c"/></svg></div>
    <div class="w-[55px] flex justify-center"><svg class="w-[30px] h-[30px]" viewBox="0 0 30 30"><circle cx="15" cy="15" r="15" fill="#34a853"/><path d="M15 0a15 15 0 0 1 13 7.500H15L9 18.500 2 7.500A15 15 0 0 1 15 0z" fill="#e33b2e"/><path d="M28 7.500A15 15 0 0 1 15 30l6.500-11.300c1.500-3 1-8-3.500-11.200z" fill="#fbc116"/><path d="M2 7.500A15 15 0 0 0 15 30l5.500-9.500C15 23.500 10 21 8.500 18.500z" fill="#269245"/><circle cx="15" cy="15" r="7.200" fill="#fff"/><circle cx="15" cy="15" r="5.800" fill="#2f78ec"/></svg></div>
    <div class="relative w-[55px] flex justify-center"><svg class="w-[28px] h-[27px]" viewBox="0 0 28 27"><rect x="13" y="3" width="14.500" height="21" rx="1" fill="#fff" stroke="#2a5699"/><path d="M15 6.500h10M15 9.500h10M15 12.500h10M15 15.500h10M15 18.500h10M15 21.500h10" stroke="#2a5699" stroke-width="1.500"/><path d="M0 3l16-3v27L0 24z" fill="#2a5699"/><text x="8" y="18.500" text-anchor="middle" font-family="Open Sans" font-size="13" font-weight="700" fill="#fff">W</text></svg><div class="absolute top-[34px] left-[24px] w-2 h-1 rounded-full bg-[#7d8a8d]"></div></div>
    <div class="relative w-[55px] flex justify-center"><svg class="w-[28px] h-[30px] overflow-visible" viewBox="0 0 28 30"><path d="M8 1c3-1 5 0 6 1 8 0 13 6 12 14 2 4 2 12-6 12-2 0-3 0-4-.5C7 28 2 23 2 15-1 10 0 3 8 1z" fill="#12a5ee"/><text x="14" y="22" text-anchor="middle" font-family="Open Sans" font-size="21" font-weight="700" fill="#fff">S</text><path d="M18-5c4-2 6-1 8 0 6 0 8 4 7 8 2 4 1 8-2 9-3 1-4 0-5-1-5 0-8-3-8-7-2-3-2-6 0-9z" fill="#fdfffa" stroke="#7cb82f" stroke-width="2"/></svg><div class="absolute top-[36px] left-[24px] w-2 h-1 rounded-full bg-[#7d8a8d]"></div></div>
    <div class="relative w-[55px] flex justify-center"><svg class="w-[30px] h-[30px]" viewBox="0 0 30 30"><path d="M22 0v8L4 22c-.6.500-1 .4-1.500 0L.5 20.500c-.6-.6-.6-1.200 0-1.800L21 .5z" fill="#0a72b8"/><path d="M22 30v-8L4 8c-.6-.5-1-.4-1.500 0L.5 9.500c-.6.6-.6 1.200 0 1.800L21 29.500z" fill="#0f84cf"/><path d="M22 0l7 3c.6.300 1 .8 1 1.500v21c0 .7-.4 1.200-1 1.500l-7 3z" fill="#27a3f0"/></svg><div class="absolute top-[36px] left-[24px] w-2 h-1 rounded-full bg-[#7d8a8d]"></div></div>
  </div>
  <div class="ml-auto flex items-center text-[#1a1f21]">
    <svg class="w-[14px] h-2" viewBox="0 0 14 8"><path d="M1 7l6-6 6 6" fill="none" stroke="#1b1b1b" stroke-width="1.700"/></svg>
    <div class="ml-[26px] -mt-[2px] w-[29px] leading-[20px] text-center tracking-[-0.4px]"><div>ENG</div><div>IN</div></div>
    <svg class="ml-[23px] -mt-px w-5 h-[15px]" viewBox="0 0 20 15"><path d="M.7 5.500a13 13 0 0 1 18.600 0M3.500 8.300a9.200 9.200 0 0 1 13 0M6.300 11a5.200 5.200 0 0 1 7.400 0" fill="none" stroke="#1b1b1b" stroke-width="1.300"/><circle cx="10" cy="13" r="1.800" fill="#1b1b1b"/></svg>
    <svg class="ml-[10px] -mt-px w-[19px] h-[15px]" viewBox="0 0 19 15"><path d="M.7 5h3l4.600-4v13l-4.600-4h-3zM12 4.500l6 6M18 4.500l-6 6" fill="none" stroke="#1b1b1b" stroke-width="1.200" stroke-linejoin="round"/></svg>
    <svg class="ml-[11px] -mt-px w-5 h-[13px]" viewBox="0 0 20 13"><rect x=".7" y=".7" width="16.600" height="11.600" rx="2.500" fill="none" stroke="#1b1b1b" stroke-width="1.300"/><rect x="3" y="3" width="8.500" height="7" rx=".8" fill="#1b1b1b"/><path d="M18 4.500h2v4h-2z" fill="#1b1b1b"/></svg>
    <div class="ml-[19px] -mt-[2px] w-[78px] leading-[20px] text-right"><div class="tracking-[-0.2px]">13:02</div><div class="tracking-[0.18px]">27-03-2024</div></div>
    <svg class="ml-[12px] w-4 h-[19px]" viewBox="0 0 16 19"><path d="M8 0c4 0 6 3 6 6.500V11l2 3v1H0v-1l2-3V6.500C2 3 4 0 8 0zM5 16.500h6c-.5 3-5.500 3-6 0z" fill="#04377b"/></svg>
    <div class="relative ml-[22px] mr-[26px] w-[29px] h-[28px]"><svg class="w-[29px] h-[24px]" viewBox="0 0 31 27"><path d="M17 0h3c2 0 3 2 4 6l1 3h-9z" fill="#2447c4"/><path d="M8 0h11c-3 0-4 2-5 6l-3 11c-1 3-3 3-5 3H3c-3 0-4-2-2.500-7L3 5c1-3 2-5 5-5z" fill="url(#preA)"/><path d="M23 27H13c3 0 4-2 5-6l3-9c1-3 2-4 5-4h2c3 0 4 2 2.500 7L28 22c-1 3-2 5-5 5z" fill="url(#preB)"/></svg><div class="absolute left-[7px] top-[19px] w-[22px] h-[10px] rounded-[3px] bg-[#fdc50b] text-[8px] leading-[10px] font-extrabold text-center text-[#1c1c1c]">PRE</div></div>
  </div>
</footer>
</body>
</html>
